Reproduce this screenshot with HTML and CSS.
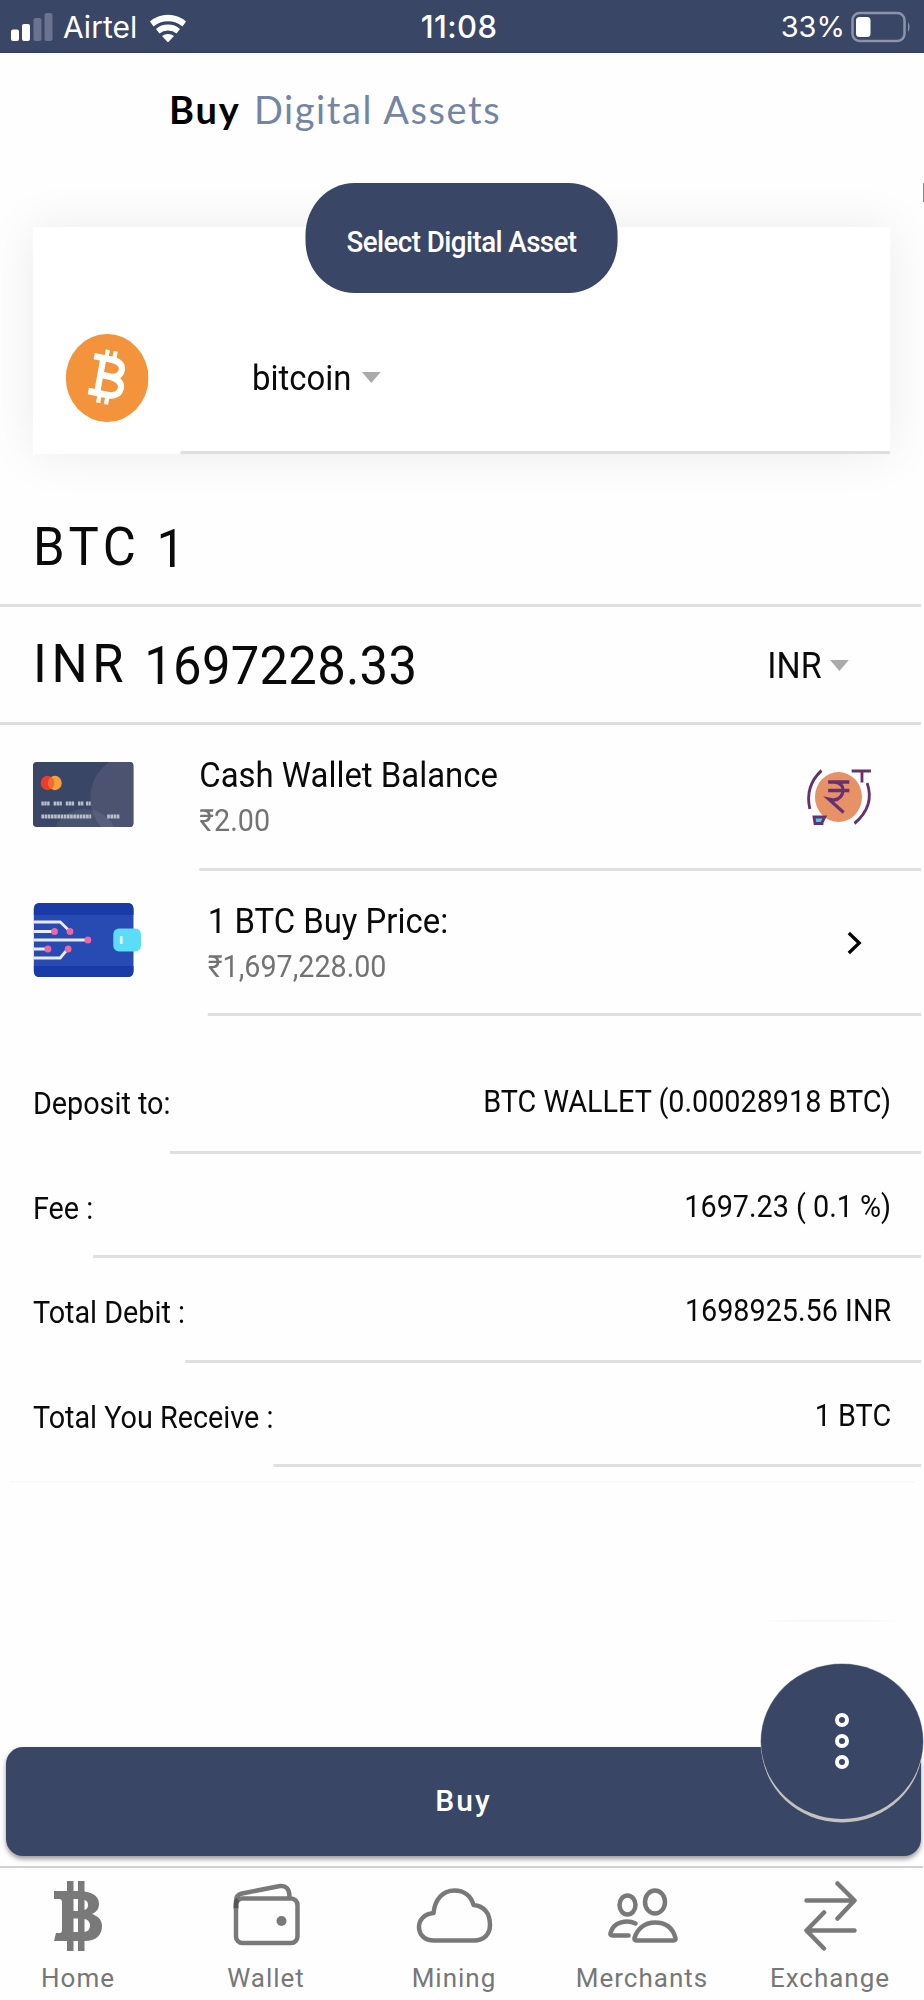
FILE: index.html
```html
<!DOCTYPE html>
<html lang="en">
<head>
<meta charset="utf-8">
<title>Buy Digital Assets</title>
<link rel="stylesheet" href="styles.css">
</head>
<body>
<div class="page">
  <div class="status">
    <div class="status-side">
      <svg class="signal" width="42" height="30" viewBox="0 0 42 30">
        <rect x="0" y="17.500" width="8" height="11.500" rx="2" fill="#fff"/>
        <rect x="11" y="12" width="8" height="17" rx="2" fill="#fff"/>
        <rect x="22.500" y="6" width="8" height="23" rx="2" fill="#6a7390"/>
        <rect x="33.500" y="1" width="8" height="28" rx="2" fill="#6a7390"/>
      </svg>
      <span class="carrier">Airtel</span>
      <svg class="wifi" width="38" height="30" viewBox="0 0 38 30">
        <path d="M1 9.500A26 24 0 0 1 37 9.500L33.500 14.500A21 19 0 0 0 4.500 14.500Z" fill="#fff"/>
        <path d="M7 17A17 15 0 0 1 31 17L27.500 21.500A12 10 0 0 0 10.500 21.500Z" fill="#fff"/>
        <path d="M13 24A9 8 0 0 1 25 24L19 30.500Z" fill="#fff"/>
      </svg>
    </div>
    <span class="clock">11:08</span>
    <div class="status-side status-right">
      <span class="percent">33%</span>
      <svg width="60" height="32" viewBox="0 0 60 32">
        <rect x="1.500" y="2" width="52" height="28" rx="7" fill="none" stroke="#8d94a9" stroke-width="2.500"/>
        <rect x="5" y="6" width="14.500" height="20" rx="3.500" fill="#fff"/>
        <path d="M57 11Q60 16 57 21Z" fill="#8d94a9"/>
      </svg>
    </div>
  </div>

  <h1 class="title"><b>Buy</b> <span>Digital Assets</span></h1>

  <main class="content">
    <section class="card">
      <div class="pill">Select Digital Asset</div>
      <div class="asset">
        <svg class="coin" width="88" height="88" viewBox="0 0 88 88">
          <circle cx="44" cy="44" r="44" fill="#f3943d"/>
          <g transform="translate(43.500 43) rotate(11)" fill="none" stroke="#fff">
            <path d="M-17 -18H4Q14.500 -17 14.500 -9.500Q14 -1.500 4 -1H-5M4 -1Q17 0 17 8.500Q16 17.500 4 17.500H-16.500M-7 -18V17.500" stroke-width="6.500"/>
            <path d="M-4 -27V-18M4.500 -27V-18M-4 18V27M4.500 18V27" stroke-width="4.500"/>
          </g>
        </svg>
        <div class="asset-select">bitcoin <i class="caret"></i></div>
      </div>
    </section>

    <section class="amount amount-btc">
      <span class="unit">BTC</span><span class="number">1</span>
    </section>
    <section class="amount">
      <span class="unit">INR</span><span class="number">1697228.33</span>
      <div class="currency">INR <i class="caret"></i></div>
    </section>

    <section class="item">
      <svg class="item-icon cash-icon" width="107" height="65" viewBox="0 0 107 65">
        <clipPath id="card-shape"><rect width="107" height="65" rx="4"/></clipPath>
        <g clip-path="url(#card-shape)">
          <rect width="107" height="65" fill="#3a4665"/>
          <circle cx="103" cy="36" r="42" fill="#4b5370"/>
          <ellipse cx="55" cy="77" rx="34" ry="30" fill="#fff" opacity=".07"/>
        </g>
        <circle cx="15.500" cy="21" r="7.200" fill="#ee3a2f"/>
        <circle cx="23.500" cy="21" r="7.200" fill="#f5a03b"/>
        <path d="M19.500 15A7.200 7.200 0 0 1 19.500 27A7.200 7.200 0 0 1 19.500 15" fill="#f06b2d"/>
        <g stroke="#b9bdca" stroke-width="4">
          <path d="M9 41.500h9M22 41.500h9M35 41.500h9M48 41.500h6M56.500 41.500h5" stroke-dasharray="2.600 .5"/>
          <path d="M9 54.500h53M79 54.500h13" stroke-dasharray="2.800 .6"/>
        </g>
      </svg>
      <div class="item-body">
        <div class="item-text">
          <div class="item-title">Cash Wallet Balance</div>
          <div class="item-sub">₹2.00</div>
        </div>
        <svg class="rupee" width="70" height="56" viewBox="0 0 70 56">
          <ellipse cx="35" cy="28" rx="25" ry="25" fill="#e69166"/>
          <g fill="none" stroke="#673070" stroke-width="3">
            <path d="M17 1.500Q-1 17 4.500 40M65.500 14Q74 37 52 54.500M49 2H69.500M60 2V13.500"/>
            <path d="M24 13H46.500M24 21.500H46.500M28 13H31Q40 14 40 21.500Q39 30 30 31L24.500 30L40.500 43.500" stroke-width="3.300"/>
            <path d="M19 54.500H10L9 48H20.500L17 54.500" fill="#44cfee"/>
          </g>
        </svg>
      </div>
    </section>

    <section class="item">
      <svg class="item-icon wallet-art" width="114" height="74" viewBox="0 0 114 74">
        <rect width="106" height="74" rx="6" fill="#284ab3"/>
        <path d="M0 12V6Q0 0 6 0H100Q106 0 106 6V12ZM0 63V68Q0 74 6 74H100Q106 74 106 68V63Z" fill="#193ba8"/>
        <path d="M0 19H28L38 28M0 28.500H21M0 37H57M0 46H14M0 55H28L36 46" fill="none" stroke="#e8ecfb" stroke-width="3"/>
        <g fill="#ee67a5"><circle cx="38.500" cy="28.500" r="3.600"/><circle cx="22" cy="28.500" r="3.600"/><circle cx="57.500" cy="37" r="3.600"/><circle cx="15" cy="46" r="3.600"/><circle cx="36.500" cy="46" r="3.600"/></g>
        <rect x="84.500" y="25.500" width="29.500" height="23" rx="6" fill="#5bdcf9"/>
        <rect x="91.500" y="33" width="3" height="8" rx="1" fill="#e6fbff"/>
      </svg>
      <div class="item-body">
        <div class="item-text">
          <div class="item-title">1 BTC Buy Price:</div>
          <div class="item-sub">₹1,697,228.00</div>
        </div>
        <svg class="chevron" width="18" height="24" viewBox="0 0 18 24"><path d="M3 2L14 12L3 22" fill="none" stroke="#000" stroke-width="3.500"/></svg>
      </div>
    </section>

    <section class="details">
      <div class="detail"><span class="label">Deposit to:</span><span class="value">BTC WALLET (0.00028918 BTC)</span></div>
      <div class="detail"><span class="label">Fee :</span><span class="value">1697.23 ( 0.1 %)</span></div>
      <div class="detail"><span class="label">Total Debit :</span><span class="value">1698925.56 INR</span></div>
      <div class="detail"><span class="label">Total You Receive :</span><span class="value">1 BTC</span></div>
    </section>
    <div class="fade-rule"></div>
  </main>
  <div class="fab-rule"></div>

  <div class="action">
    <button class="buy">Buy</button>
    <div class="fab">
      <svg width="16" height="60" viewBox="0 0 16 60" fill="none" stroke="#fff" stroke-width="4">
        <circle cx="8" cy="9" r="5"/><circle cx="8" cy="30" r="5"/><circle cx="8" cy="51" r="5"/>
      </svg>
    </div>
  </div>

  <nav class="tabs">
    <a class="tab">
      <svg width="80" height="74" viewBox="4 0 80 74">
        <path fill="#797979" fill-rule="evenodd" d="M21 14H34V4H40.500V14H45V4H51.500V14.500C62 16 66 21 66 27C66 32 63 35.500 59 37C65 39 69 43 69 49C69 58 63 64 51.500 64V74H45V64H40.500V74H34V64H21L23 56H27Q29 56 29 53V25Q29 22 26 22H21ZM40.500 22V34H45V22ZM51.500 23V33Q55 32 55 28Q55 24 51.500 23ZM40.500 41.500V55H45V41.500ZM51.500 42V55Q57 54 57 48.500Q57 43 51.500 42Z"/>
      </svg>
      <span>Home</span>
    </a>
    <a class="tab">
      <svg width="80" height="74" viewBox="2 0 80 74" fill="none" stroke="#797979" stroke-width="4.500">
        <rect x="13" y="21.500" width="61.500" height="44.500" rx="6.500"/>
        <path d="M13 32V24Q13 18 19 16.500L57 9Q66 8 66.500 19V22"/>
        <path d="M13 31V27Q13 24 15 22.500" stroke="#555"/>
        <circle cx="58.500" cy="44" r="5" fill="#797979" stroke="none"/>
      </svg>
      <span>Wallet</span>
    </a>
    <a class="tab">
      <svg width="80" height="74" viewBox="-1 0 80 74" fill="none" stroke="#797979" stroke-width="4.500">
        <path d="M20 63.500H60C70 63.500 76 57 76 48C76 36 70 29 59.500 28C57 19 50 13.500 40.500 13.500C29 13.500 21 22 19.500 36C10 37 5 43 5 50C5 58 11 63.500 20 63.500Z" stroke-linejoin="round"/>
      </svg>
      <span>Mining</span>
    </a>
    <a class="tab">
      <svg width="80" height="74" viewBox="2.500 0 80 74" fill="none" stroke="#797979" stroke-width="4.500" stroke-linecap="round" stroke-linejoin="round">
        <ellipse cx="29" cy="28" rx="8" ry="9.500"/><ellipse cx="56.500" cy="25" rx="10" ry="11.500"/>
        <path d="M37 46.500C29 42.500 15 44.500 12 56Q11.500 58.500 14 58.500H30"/>
        <path d="M38.500 63.500H75Q77.500 63.500 77 61C74 50 66 45.500 56.500 45.500C47 45.500 39 51 36 61Q35.500 63.500 38.500 63.500Z"/>
      </svg>
      <span>Merchants</span>
    </a>
    <a class="tab">
      <svg width="80" height="74" viewBox="2 0 80 74" fill="none" stroke="#797979" stroke-width="4.500" stroke-linecap="round" stroke-linejoin="round">
        <path d="M19.500 23.500H67M50.500 6.500L67.500 23.500L50.500 41.500M67.500 53.500H20M37 35.500L19.500 53.500L37 71.500"/>
      </svg>
      <span>Exchange</span>
    </a>
  </nav>
  <i class="edge-mark"></i>
</div>
</body>
</html>
```
FILE: styles.css
```css
* { box-sizing: border-box; }
html, body { margin: 0; }
body { background: #fefefe; color: #0a0a0a; font-family: Roboto, "Liberation Sans", sans-serif; overflow: hidden; }
svg { display: block; flex: none; }

.page { position: relative; display: flex; flex-direction: column; width: 924px; height: 2000px; overflow: hidden; }

/* Status bar */
.status { display: flex; align-items: center; height: 53px; flex: none; padding: 1px 13px 0 11px; background: #3a4665; color: #fff; font-family: Inter, sans-serif; font-size: 30px; border-bottom: 1px solid #303c63; }
.status-side { display: flex; align-items: center; flex: 1; height: 53px; }
.status-right { justify-content: flex-end; gap: 6px; }
.carrier { margin-left: 10px; font-size: 30px; }
.wifi { margin-left: 12px; }
.clock { margin-left: -4px; font-weight: 500; font-size: 31px; letter-spacing: .4px; }
.percent { font-size: 29px; }

.title { flex: none; height: 174px; margin: 0; padding: 26px 0 0 169px; font: 400 38px/60px Lato, sans-serif; letter-spacing: 1.600px; color: #7485a3; }
.title b { margin-right: 2px; font-weight: 700; color: #000; letter-spacing: 1.800px; }

/* Content is laid out 983px wide and narrowed to the page width */
.content { flex: none; width: 983px; transform: scaleX(.94); transform-origin: 0 0; }

.card { width: 912px; height: 227px; margin-left: 35px; background: #fff; box-shadow: 0 0 48px rgba(0,0,0,.08); display: flex; flex-direction: column; }
.pill { flex: none; width: 332px; height: 110px; margin: -44px auto 0; padding-top: 3px; border-radius: 52px; background: #3a4665; color: #fff; font-weight: 500; font-size: 29.500px; line-height: 112px; text-align: center; letter-spacing: -.6px; }
.asset { display: flex; flex: 1; padding-left: 35px; }
.coin { margin-top: 41px; }
.asset-select { display: flex; align-items: center; gap: 11px; flex: 1; margin-left: 34px; padding: 13px 0 0 76px; border-bottom: 3px solid #dfdfdf; font-size: 35px; }
.caret { position: relative; top: -1px; border: 10.500px solid transparent; border-top: 11px solid #aaa; border-bottom: 0; }

.amount { display: flex; align-items: flex-start; gap: 17px; width: 980px; height: 118px; padding: 27px 77px 0 35px; border-bottom: 3px solid #dfdfdf; font-size: 54px; line-height: 60px; }
.amount-btc { height: 153px; padding-top: 63px; }
.unit { letter-spacing: 5px; }
.number { margin-top: 2px; letter-spacing: .3px; }
.currency { display: flex; align-items: center; gap: 9px; margin-left: auto; padding-top: 2px; font-size: 36px; }

.item { display: flex; height: 145.500px; padding-left: 35px; width: 980px; }
.item-icon { margin-right: 70px; overflow: visible; }
.cash-icon { margin-top: 37px; }
.wallet-art { margin: 32px 71px 0 1px; }
.item-body { display: flex; flex: 1; justify-content: space-between; border-bottom: 3px solid #dfdfdf; padding-top: 31px; }
.item-title { font-size: 35px; line-height: 40px; }
.item-sub { margin-top: 10px; font-size: 30.500px; line-height: 30px; color: #737373; }
.rupee { margin: 13px 53px 0 0; overflow: visible; }
.chevron { margin: 29px 62px 0 0; }

.details { margin-top: 33px; }
.detail { display: flex; width: 980px; height: 104.600px; padding-left: 35px; font-size: 30.600px; line-height: 40px; }
.label { padding-top: 35px; }
.value { flex: 1; padding: 33px 32px 0 0; text-align: right; border-bottom: 3px solid #dfdfdf; }
.fade-rule { height: 2px; margin: 14px 10px 0; background: #fafafa; }
.fab-rule { width: 147px; height: 2px; margin: 137px 0 0 758px; background: linear-gradient(90deg, #fefefe, #f7f7f7 30% 70%, #fefefe); }

/* Primary action with the floating menu over its end */
.action { position: relative; flex: none; margin-top: auto; height: 119px; padding: 0 3px 0 6px; }
.buy { display: block; width: 915px; height: 109px; padding: 0 0 2px; border: 0; border-radius: 17px; background: #3a4665; color: #fff; font: 500 30px Roboto, sans-serif; letter-spacing: 2px; box-shadow: 0 3px 5px rgba(0,0,0,.4); }
.fab { position: absolute; left: 761px; top: -83px; display: flex; align-items: center; justify-content: center; width: 162px; height: 155px; padding-bottom: 2px; border-radius: 50%; background: #3a4665; box-shadow: 0 4px 0 -.5px #c4c2c1, 0 0 0 .5px #a5a8b3; }

.tabs { display: flex; flex: none; width: 940px; height: 134px; margin-left: -17px; border-top: 2px solid #d2d2d2; color: #777; }
.tab { display: flex; flex-direction: column; align-items: center; width: 188px; padding-top: 9px; font-size: 26px; line-height: 36px; letter-spacing: 1px; }
.tab svg { width: 80px; }
.tab span { margin: 9px 0 0 2px; }

.edge-mark { position: absolute; right: 0; top: 183px; width: 1.500px; height: 19px; background: #888; }
```
